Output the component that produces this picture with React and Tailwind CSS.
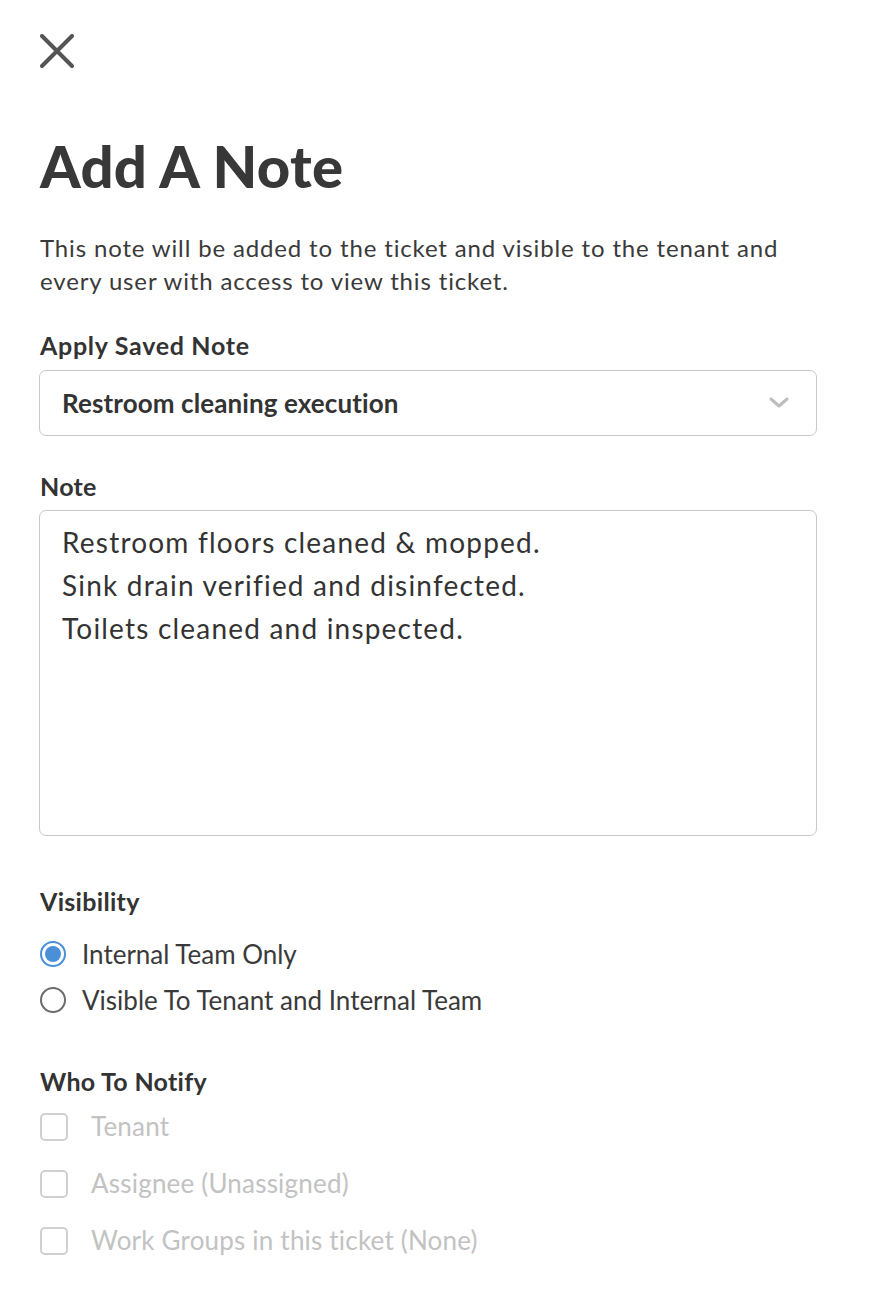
import React from "react";

const font = { fontFamily: "Lato, 'Noto Sans', sans-serif" };

function Radio({ checked, label }) {
  return (
    <div className="flex items-center h-[46px]">
      {checked ? (
        <span className="w-[26px] h-[26px] rounded-full border-[2px] border-[#4a90d9] flex items-center justify-center shrink-0">
          <span className="w-[16px] h-[16px] rounded-full bg-[#4a90d9]" />
        </span>
      ) : (
        <span className="w-[26px] h-[26px] rounded-full border-[2px] border-[#6b6b6b] shrink-0" />
      )}
      <span className="ml-[16px] text-[26px] text-[#3a3a3a]">{label}</span>
    </div>
  );
}

function Check({ label }) {
  return (
    <div className="flex items-center h-[57px]">
      <span className="w-[28px] h-[28px] rounded-[5px] border-[2px] border-[#d0d0d0] shrink-0" />
      <span className="ml-[23px] text-[26px] text-[#c2c2c2] tracking-[0.2px]">{label}</span>
    </div>
  );
}

export default function App() {
  return (
    <div className="w-[870px] h-[1310px] bg-white pl-[40px] pr-[53px] pt-[34px]" style={font}>
      <svg width="35" height="34" viewBox="0 0 35 34" className="block">
        <path d="M2 2 L32 32 M32 2 L2 32" stroke="#555" strokeWidth="4" strokeLinecap="round" />
      </svg>

      <h1 className="mt-[66px] text-[58px] leading-[64px] font-black text-[#383838] tracking-[0.3px]">Add A Note</h1>

      <p className="mt-[33px] text-[24px] leading-[33px] text-[#3a3a3a] tracking-[0.85px]">
        This note will be added to the ticket and visible to the tenant and
        <br />
        every user with access to view this ticket.
      </p>

      <div className="mt-[33px] text-[25px] leading-[30px] font-bold text-[#333] tracking-[0.7px]">Apply Saved Note</div>
      <div className="mt-[10px] h-[66px] border border-[#c8c8c8] rounded-[7px] flex items-center justify-between pl-[22px] pr-[26px] -ml-[1px]">
        <span className="text-[26px] font-bold text-[#333] tracking-[0.1px]">Restroom cleaning execution</span>
        <svg width="22" height="14" viewBox="0 0 22 14">
          <path d="M3 3 L11 10 L19 3" stroke="#bdbdbd" strokeWidth="3" fill="none" strokeLinecap="round" strokeLinejoin="round" />
        </svg>
      </div>

      <div className="mt-[35px] text-[25px] leading-[30px] font-bold text-[#333] tracking-[0.3px]">Note</div>
      <div className="mt-[9px] h-[326px] border border-[#c8c8c8] rounded-[7px] pl-[22px] pt-[10px] -ml-[1px] text-[28px] leading-[43px] text-[#333] tracking-[1.2px]">
        <div>Restroom floors cleaned &amp; mopped.</div>
        <div>Sink drain verified and disinfected.</div>
        <div>Toilets cleaned and inspected.</div>
      </div>

      <div className="mt-[50px] text-[25px] leading-[30px] font-bold text-[#333] tracking-[0.3px]">Visibility</div>
      <div className="mt-[15px]">
        <Radio checked label="Internal Team Only" />
        <Radio label="Visible To Tenant and Internal Team" />
      </div>

      <div className="mt-[43px] text-[25px] leading-[30px] font-bold text-[#333] tracking-[0.3px]">Who To Notify</div>
      <div className="mt-[2px]">
        <Check label="Tenant" />
        <Check label="Assignee (Unassigned)" />
        <Check label="Work Groups in this ticket (None)" />
      </div>
    </div>
  );
}
